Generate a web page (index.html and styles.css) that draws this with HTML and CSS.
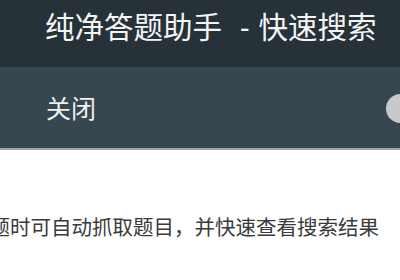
FILE: index.html
```html
<!DOCTYPE html>
<html lang="zh">
<head>
<meta charset="utf-8">
<link rel="stylesheet" href="styles.css">
</head>
<body>
<div class="page">
  <header class="header">
    <h1 class="title">纯净答题助手<span class="dash">-</span>快速搜索</h1>
  </header>
  <section class="switch-bar">
    <span class="switch-label">关闭</span>
    <span class="switch">
      <span class="knob"></span>
    </span>
  </section>
  <main class="content">
    <p class="desc">答题时可自动抓取题目，并快速查看搜索结果</p>
  </main>
</div>
</body>
</html>
```
FILE: styles.css
```css
html, body {
  margin: 0;
  padding: 0;
  background: #ffffff;
  width: 400px;
  height: 280px;
  overflow: hidden;
}
.page {
  font-family: "Noto Sans CJK SC", "Noto Sans", sans-serif;
  width: 400px;
}
.header {
  background: #263238;
  height: 67px;
  display: flex;
  align-items: flex-start;
  padding-left: 45px;
  box-sizing: border-box;
}
.title {
  margin: 0;
  padding-top: 5px;
  font-size: 29.5px;
  font-weight: 400;
  color: #f4f6f6;
  line-height: 40px;
  white-space: nowrap;
}
.dash {
  display: inline-block;
  padding: 0 9px 0 18px;
  font-family: "Noto Sans", sans-serif;
}
.switch-bar {
  background: #37474f;
  height: 83px;
  border-bottom: 2px solid #9ea3a5;
  display: flex;
  align-items: center;
  justify-content: space-between;
  padding-left: 46px;
  box-sizing: border-box;
  overflow: hidden;
}
.switch-label {
  font-size: 25px;
  color: #eef0f0;
  line-height: 30px;
  padding-bottom: 2px;
}
.switch {
  width: 20px;
  height: 30px;
  position: relative;
}
.knob {
  position: absolute;
  left: 6px;
  top: 1px;
  width: 29px;
  height: 29px;
  border-radius: 50%;
  background: #c9c9cb;
}
.content {
  padding-top: 62px;
  overflow: hidden;
}
.desc {
  margin: 0 0 0 -31px;
  font-size: 20.5px;
  line-height: 28px;
  color: #3a3a3a;
  white-space: nowrap;
}
```
